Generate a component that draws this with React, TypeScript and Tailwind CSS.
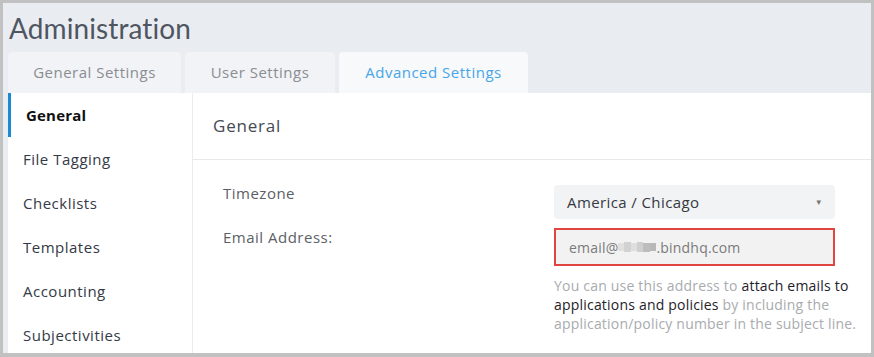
import React from 'react';

const tabs = [
  { label: 'General Settings', w: 'w-[173px]' },
  { label: 'User Settings', w: 'w-[150px]' },
  { label: 'Advanced Settings', w: 'w-[189px]', active: true },
];

const menu = ['General', 'File Tagging', 'Checklists', 'Templates', 'Accounting', 'Subjectivities'];

function Blur() {
  // pixelated redaction in the email
  return (
    <span className="inline-flex items-center align-middle h-[12px] w-[38px]">
      <span className="h-[8px] w-[6px] bg-[#e0e0e0]" />
      <span className="h-[10px] w-[7px] bg-[#d2d2d2]" />
      <span className="h-[8px] w-[6px] bg-[#dedede]" />
      <span className="h-[10px] w-[6px] bg-[#cfcfcf]" />
      <span className="h-[9px] w-[7px] bg-[#bdbdbd]" />
      <span className="h-[8px] w-[6px] bg-[#b8b8b8]" />
    </span>
  );
}

export default function App() {
  return (
    <div
      className="w-[874px] h-[357px] border-[3px] border-b-4 border-[#c1c1c1] bg-[#e9edf1] flex flex-col overflow-hidden tracking-[0.5px]"
      style={{ fontFamily: '"Open Sans", Lato, sans-serif' }}
    >
      <div className="h-[49px] shrink-0 pl-[6px] flex items-center">
        <h1 className="text-[28px] text-[#4f5561] leading-none tracking-[0.1px]" style={{ fontFamily: 'Lato, sans-serif' }}>
          Administration
        </h1>
      </div>

      <div className="flex shrink-0 pl-[5px] gap-[4px] h-[41px]">
        {tabs.map((t) => (
          <div
            key={t.label}
            className={`${t.w} rounded-t-[4px] flex items-center justify-center text-[15px] ${
              t.active ? 'bg-[#f7f9fb] text-[#49a6e6]' : 'bg-[#f1f3f6] text-[#8a8d92]'
            }`}
          >
            {t.label}
          </div>
        ))}
      </div>

      <div className="flex flex-1 min-h-0 pl-[5px]">
        <div className="w-[185px] shrink-0 bg-white border-r border-[#ececec] flex flex-col">
          {menu.map((m, i) => (
            <div
              key={m}
              className={`h-[44px] shrink-0 flex items-center text-[15px] border-l-[3px] ${
                i === 0
                  ? 'border-[#1a8ad4] pl-[15px] font-bold text-[#111] tracking-[0.2px]'
                  : 'border-transparent pl-[12px] text-[#333a46]'
              }`}
            >
              {m}
            </div>
          ))}
        </div>

        <div className="flex-1 bg-white flex flex-col">
          <div className="h-[67px] shrink-0 border-b border-[#e9e9e9] flex items-center pl-[20px] text-[17px] tracking-[0.8px] text-[#454a52]">
            General
          </div>

          <div className="flex pl-[30px] pt-[25px]">
            <div className="w-[331px] flex flex-col text-[15px] text-[#5b5f66]">
              <div className="h-[34px] leading-[16px]">Timezone</div>
              <div className="mt-[10px] leading-[16px]">Email Address:</div>
            </div>

            <div className="w-[281px] flex flex-col">
              <div className="h-[34px] rounded-[4px] bg-[#f2f3f5] flex items-center justify-between pl-[13px] pr-[12px] text-[15px] tracking-[0.4px] text-[#353a42]">
                <span>America / Chicago</span>
                <span className="text-[8px] text-[#777]">▼</span>
              </div>
              <div className="mt-[9px] h-[38px] border-2 border-[#e0453f] bg-[#f2f2f2] flex items-center pl-[13px] text-[14px] tracking-[0.2px] text-[#7a7a7a]">
                email@
                <Blur />
                .bindhq.com
              </div>
              <p className="mt-[10px] text-[14px] leading-[19px] tracking-[0.2px] text-[#a9abae] w-[318px]">
                You can use this address to <span className="text-[#1e2229]">attach emails to applications and policies</span> by
                including the application/policy number in the subject line.
              </p>
            </div>
          </div>
        </div>
      </div>
    </div>
  );
}
